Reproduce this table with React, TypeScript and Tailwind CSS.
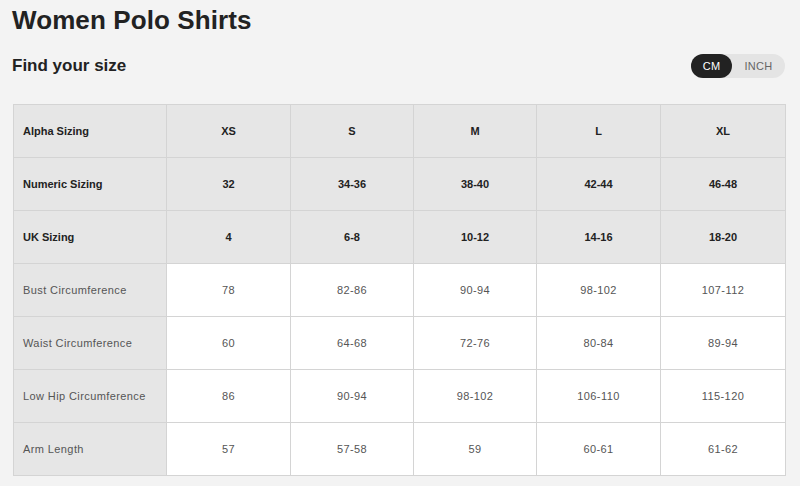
import React, { useState } from 'react';

const sizes = ['XS', 'S', 'M', 'L', 'XL'];

const headRows = [
  { label: 'Alpha Sizing', values: sizes },
  { label: 'Numeric Sizing', values: ['32', '34-36', '38-40', '42-44', '46-48'] },
  { label: 'UK Sizing', values: ['4', '6-8', '10-12', '14-16', '18-20'] },
];

const bodyRows = [
  { label: 'Bust Circumference', values: ['78', '82-86', '90-94', '98-102', '107-112'] },
  { label: 'Waist Circumference', values: ['60', '64-68', '72-76', '80-84', '89-94'] },
  { label: 'Low Hip Circumference', values: ['86', '90-94', '98-102', '106-110', '115-120'] },
  { label: 'Arm Length', values: ['57', '57-58', '59', '60-61', '61-62'] },
];

const colWidths = ['w-[153px]', 'w-[124px]', 'w-[123px]', 'w-[123px]', 'w-[124px]', 'w-[125px]'];

const App: React.FC = () => {
  const [unit, setUnit] = useState<'cm' | 'inch'>('cm');

  return (
    <div className="w-[800px] h-[486px] overflow-hidden bg-[#f3f3f3] text-[#222] font-['Liberation_Sans',Arial,sans-serif]">
      <h1 className="pl-3 pt-[4px] text-[26px] leading-[32px] font-bold tracking-[0.1px] text-[#222]">
        Women Polo Shirts
      </h1>

      <div className="flex items-center justify-between pl-3 pr-[15px] mt-[18px]">
        <h2 className="text-[17px] leading-[24px] font-bold">Find your size</h2>
        <div className="flex items-center rounded-full bg-[#e4e4e4] text-[11px] tracking-[0.3px]">
          <button
            onClick={() => setUnit('cm')}
            className={`h-6 w-[41px] rounded-full ${unit === 'cm' ? 'bg-[#222] text-white' : 'text-[#666]'}`}
          >
            CM
          </button>
          <button
            onClick={() => setUnit('inch')}
            className={`h-6 w-[53px] rounded-full ${unit === 'inch' ? 'bg-[#222] text-white' : 'text-[#666]'}`}
          >
            INCH
          </button>
        </div>
      </div>

      <table className="ml-[13px] mt-[26px] border-collapse table-fixed text-[11px]">
        <colgroup>
          {colWidths.map((w, i) => (
            <col key={i} className={w} />
          ))}
        </colgroup>
        <tbody>
          {headRows.map(row => (
            <tr key={row.label} className="h-[53px] bg-[#e6e6e6] font-bold text-[#222]">
              <td className="border border-[#d4d4d4] pl-[9px]">{row.label}</td>
              {row.values.map((v, i) => (
                <td key={i} className="border border-[#d4d4d4] text-center">{v}</td>
              ))}
            </tr>
          ))}
          {bodyRows.map(row => (
            <tr key={row.label} className="h-[53px] text-[#555] tracking-[0.4px]">
              <td className="border border-[#d4d4d4] bg-[#e6e6e6] pl-[9px]">{row.label}</td>
              {row.values.map((v, i) => (
                <td key={i} className="border border-[#d4d4d4] bg-white text-center">{v}</td>
              ))}
            </tr>
          ))}
        </tbody>
      </table>
    </div>
  );
};

export default App;
